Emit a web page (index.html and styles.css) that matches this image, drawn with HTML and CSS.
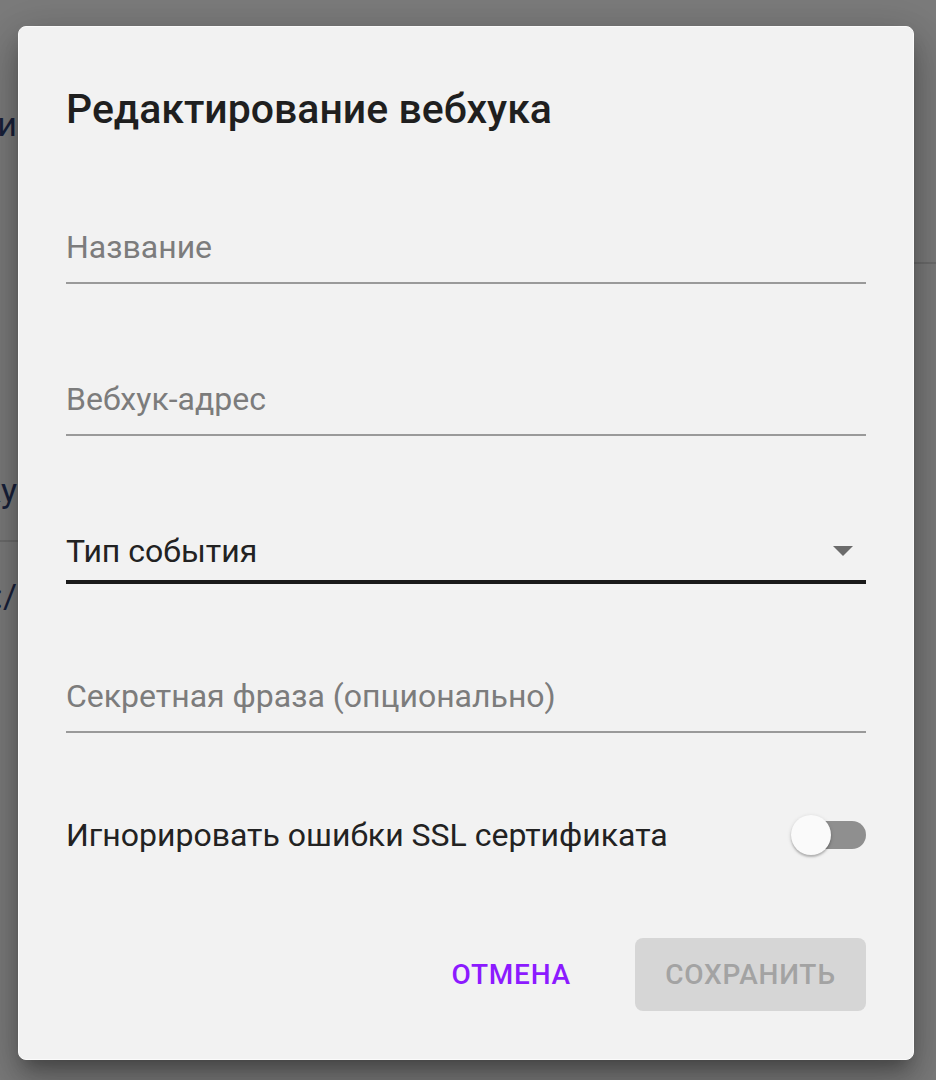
FILE: index.html
```html
<!DOCTYPE html>
<html lang="ru">
<head>
<meta charset="utf-8">
<title>Редактирование вебхука</title>
<link rel="stylesheet" href="styles.css">
</head>
<body>
<div class="page">
  <div class="bg-left">
    <div class="bg-line bg-l1"><span>Настройки</span></div>
    <div class="bg-line bg-l2"><span>Выбрать ссылку</span></div>
    <div class="bg-rule bg-r1"></div>
    <div class="bg-line bg-l3"><span>https:/</span></div>
  </div>
  <div class="bg-right">
    <div class="bg-rule bg-r2"></div>
  </div>
</div>

<div class="dialog" role="dialog">
  <h2 class="title">Редактирование вебхука</h2>
  <div class="content">
    <div class="field f1"><span class="placeholder">Название</span></div>
    <div class="field f2"><span class="placeholder">Вебхук-адрес</span></div>
    <div class="field select f3">
      <span class="value">Тип события</span>
      <svg class="arrow" width="20" height="10" viewBox="0 0 20 10"><path d="M0 0 L20 0 L10 10 Z" fill="#6b6b6b"/></svg>
    </div>
    <div class="field f4"><span class="placeholder">Секретная фраза (опционально)</span></div>
    <div class="switch-row">
      <span class="switch-label">Игнорировать ошибки SSL сертификата</span>
      <span class="switch"><span class="track"></span><span class="thumb"></span></span>
    </div>
  </div>
  <div class="actions">
    <button class="btn btn-text">Отмена</button>
    <button class="btn btn-disabled" disabled>Сохранить</button>
  </div>
</div>
</body>
</html>
```

FILE: styles.css
```css
* { box-sizing: border-box; }
html, body { margin: 0; padding: 0; }
body {
  width: 936px;
  height: 1080px;
  background: #7b7b7b;
  font-family: Roboto, "Noto Sans", sans-serif;
  overflow: hidden;
  position: relative;
}
.page {
  display: flex;
  justify-content: space-between;
  height: 1080px;
}
.bg-left {
  width: 18px;
  overflow: hidden;
  display: flex;
  flex-direction: column;
}
.bg-right {
  width: 22px;
  display: flex;
  flex-direction: column;
}
.bg-line {
  display: flex;
  justify-content: flex-end;
  white-space: nowrap;
  font-size: 34px;
  line-height: 40px;
  color: #18213a;
  padding-right: 1px;
}
.bg-l1 { margin-top: 104px; }
.bg-l2 { margin-top: 326px; }
.bg-l3 { margin-top: 34px; }
.bg-rule { height: 2px; background: #6c6c6c; }
.bg-r1 { margin-top: 30px; }
.bg-r2 { margin-top: 262px; }

.dialog {
  position: absolute;
  left: 18px;
  top: 26px;
  width: 896px;
  height: 1034px;
  background: #f2f2f2;
  border: 1px solid #fbfbfb;
  border-radius: 8px;
  padding: 58px 47px 48px;
  display: flex;
  flex-direction: column;
  box-shadow: 0 12px 18px -6px rgba(0,0,0,0.3), 0 24px 40px 4px rgba(0,0,0,0.16), 0 8px 46px 8px rgba(0,0,0,0.12);
}
.title {
  margin: 0;
  font-size: 41px;
  line-height: 48px;
  font-weight: 500;
  color: #1f1f1f;
}
.content {
  display: flex;
  flex-direction: column;
}
.field {
  display: flex;
  align-items: center;
  font-size: 32px;
  line-height: 40px;
  padding-bottom: 15px;
  border-bottom: 2px solid #9a9a9a;
}
.f1 { margin-top: 94px; }
.f2 { margin-top: 95px; }
.f3 { margin-top: 95px; }
.f4 { margin-top: 92px; }
.placeholder { color: #7c7c7c; }
.select {
  justify-content: space-between;
  padding-bottom: 9px;
  border-bottom: 4px solid #1a1a1a;
}
.value { color: #222; }
.arrow { margin-right: 13px; }

.switch-row {
  margin-top: 82px;
  height: 40px;
  display: flex;
  align-items: center;
  justify-content: space-between;
}
.switch-label {
  font-size: 32px;
  line-height: 40px;
  color: #222;
}
.switch {
  position: relative;
  width: 75px;
  height: 40px;
}
.track {
  position: absolute;
  right: 0;
  top: 6px;
  width: 68px;
  height: 28px;
  border-radius: 14px;
  background: #8f8f8f;
}
.thumb {
  position: absolute;
  left: 0;
  top: 0;
  width: 40px;
  height: 40px;
  border-radius: 50%;
  background: #fafafa;
  box-shadow: 0 2px 2px rgba(0,0,0,0.2), 0 1px 4px rgba(0,0,0,0.14);
}

.actions {
  margin-top: auto;
  display: flex;
  justify-content: flex-end;
  align-items: center;
  gap: 48px;
}
.btn {
  font-family: Roboto, "Noto Sans", sans-serif;
  font-size: 28px;
  font-weight: 500;
  text-transform: uppercase;
  letter-spacing: 0.8px;
  border: none;
  border-radius: 8px;
  height: 73px;
  background: transparent;
  padding: 0 16px;
}
.btn-text { color: #8c1aff; }
.btn-disabled {
  background: #d6d6d6;
  color: #a3a3a3;
  width: 231px;
  padding: 0;
}
```
